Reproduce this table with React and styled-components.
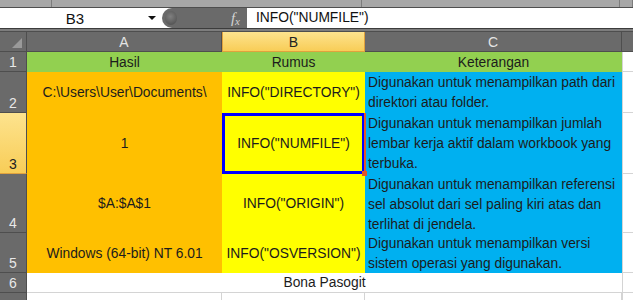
import styled, { createGlobalStyle } from "styled-components";

const GlobalStyle = createGlobalStyle`
  html, body {
    margin: 0;
    padding: 0;
    background: #fff;
  }
  body {
    font-family: "Liberation Sans", Arial, sans-serif;
  }
`;

const rows = [
  {
    n: 2,
    hasil: "C:\\Users\\User\\Documents\\",
    rumus: 'INFO("DIRECTORY")',
    ket: ["Digunakan untuk menampilkan path dari", "direktori atau folder."],
  },
  {
    n: 3,
    hasil: "1",
    rumus: 'INFO("NUMFILE")',
    ket: [
      "Digunakan untuk menampilkan jumlah",
      "lembar kerja aktif dalam workbook yang",
      "terbuka.",
    ],
    selected: true,
  },
  {
    n: 4,
    hasil: "$A:$A$1",
    rumus: 'INFO("ORIGIN")',
    ket: [
      "Digunakan untuk menampilkan referensi",
      "sel absolut dari sel paling kiri atas dan",
      "terlihat di jendela.",
    ],
  },
  {
    n: 5,
    hasil: "Windows (64-bit) NT 6.01",
    rumus: 'INFO("OSVERSION")',
    ket: ["Digunakan untuk menampilkan versi", "sistem operasi yang digunakan."],
  },
];

const App = () => {
  return (
    <Window>
      <GlobalStyle />
      <TopStrip>
        <RibbonPart $w={52} />
        <RibbonPart $w={310} />
        <RibbonPart $w={258} />
        <RibbonPart />
      </TopStrip>

      <FormulaRow>
        <NameBox>
          <span>B3</span>
          <DropArrow />
        </NameBox>
        <FxArea>
          <Grip />
          <FxLabel>
            f<sub>x</sub>
          </FxLabel>
        </FxArea>
        <FormulaInput>INFO("NUMFILE")</FormulaInput>
      </FormulaRow>
      <Gap />

      <Sheet>
        <Corner>
          <CornerTriangle />
        </Corner>
        <ColHead>A</ColHead>
        <ColHead $active>B</ColHead>
        <ColHead>C</ColHead>
        <ColHead $last />

        <RowHead>1</RowHead>
        <TitleCell>Hasil</TitleCell>
        <TitleCell>Rumus</TitleCell>
        <TitleCell>Keterangan</TitleCell>
        <Blank />

        {rows.map((r) => [
          <RowHead key={`h${r.n}`} $active={r.selected}>
            {r.n}
          </RowHead>,
          <Cell key={`a${r.n}`} $bg="#ffc000">
            {r.hasil}
          </Cell>,
          <Cell key={`b${r.n}`} $bg="#ffff00" $selected={r.selected}>
            {r.rumus}
          </Cell>,
          <NoteCell key={`c${r.n}`}>
            {r.ket.map((line) => (
              <div key={line}>{line}</div>
            ))}
          </NoteCell>,
          <Blank key={`d${r.n}`} />,
        ])}

        <RowHead>6</RowHead>
        <MergedCell>Bona Pasogit</MergedCell>
        <Blank />

        <RowHead />
        <EmptyCell />
        <EmptyCell />
        <EmptyCell />
        <Blank />
      </Sheet>
    </Window>
  );
};

const Window = styled.div`
  width: 633px;
  height: 300px;
  overflow: hidden;
  background: #fff;
`;

const TopStrip = styled.div`
  display: flex;
  height: 7px;
  background: #a7a7a7;
  border-bottom: 1px solid #4e4e4e;
`;

const RibbonPart = styled.div`
  flex: ${(p) => (p.$w ? `0 0 ${p.$w}px` : "1")};
  border-right: 1px solid #7c7c7c;
  box-sizing: border-box;
`;

const FormulaRow = styled.div`
  display: flex;
  height: 20px;
  background: #fff;
  border-bottom: 1px solid #3c3c3c;
`;

const NameBox = styled.div`
  width: 162px;
  display: flex;
  align-items: center;
  font-size: 15px;
  color: #111;
  span {
    flex: 1;
    text-align: center;
    padding-left: 2px;
  }
`;

const DropArrow = styled.i`
  width: 0;
  height: 0;
  margin-right: 6px;
  border-left: 4px solid transparent;
  border-right: 4px solid transparent;
  border-top: 4px solid #111;
`;

const FxArea = styled.div`
  width: 85px;
  display: flex;
  align-items: center;
  justify-content: space-between;
  padding: 0 7px 0 3px;
  box-sizing: border-box;
  background: #6a6a6a;
  border-radius: 10px 0 0 10px;
`;

const Grip = styled.span`
  width: 12px;
  height: 14px;
  border-radius: 50%;
  background: radial-gradient(circle at 45% 40%, #808080, #565656 75%);
`;

const FxLabel = styled.span`
  font-family: "Liberation Serif", "Times New Roman", serif;
  font-style: italic;
  font-size: 15px;
  color: #d4d4d4;
  sub {
    font-size: 11px;
    vertical-align: -2px;
  }
`;

const FormulaInput = styled.div`
  flex: 1;
  padding-left: 9px;
  font-size: 13.8px;
  line-height: 20px;
  color: #111;
`;

const Gap = styled.div`
  height: 2px;
  background: #7d7d7d;
  border-bottom: 1px solid #4e4e4e;
`;

const Sheet = styled.div`
  display: grid;
  grid-template-columns: 27px 195px 143px 257px 1fr;
  grid-template-rows: 20px 20px 41px 61px 59px 40px 20px 20px;
  font-size: 13.8px;
  color: #1c1c1c;
`;

const Corner = styled.div`
  position: relative;
  background: #6a6a6a;
  border-right: 1px solid #4e4e4e;
  border-bottom: 1px solid #4e4e4e;
`;

const CornerTriangle = styled.i`
  position: absolute;
  right: 4px;
  bottom: 3px;
  width: 0;
  height: 0;
  border-left: 10px solid transparent;
  border-bottom: 10px solid #9a9a9a;
`;

const ColHead = styled.div`
  display: flex;
  align-items: center;
  justify-content: center;
  box-sizing: border-box;
  background: ${(p) =>
    p.$active ? "linear-gradient(#fde38e, #f8cd57)" : "#6a6a6a"};
  color: ${(p) => (p.$active ? "#222" : "#e4e4e4")};
  border-right: 1px solid ${(p) => (p.$active ? "#e0a23d" : "#4e4e4e")};
  border-left: ${(p) => (p.$active ? "1px solid #e0a23d" : "none")};
  border-bottom: 1px solid ${(p) => (p.$active ? "#e0a23d" : "#4e4e4e")};
  border-right-width: ${(p) => (p.$last ? 0 : 1)}px;
  font-size: 14px;
`;

const RowHead = styled.div`
  display: flex;
  align-items: flex-end;
  justify-content: center;
  box-sizing: border-box;
  line-height: 18px;
  background: ${(p) =>
    p.$active ? "linear-gradient(#fde38e, #f8cd57)" : "#6a6a6a"};
  color: ${(p) => (p.$active ? "#222" : "#e8e8e8")};
  border-bottom: 1px solid ${(p) => (p.$active ? "#e0a23d" : "#4e4e4e")};
  border-right: 1px solid #4e4e4e;
  font-size: 14px;
`;

const TitleCell = styled.div`
  display: flex;
  align-items: center;
  justify-content: center;
  background: #92d050;
`;

const Cell = styled.div`
  position: relative;
  display: flex;
  align-items: center;
  justify-content: center;
  white-space: nowrap;
  background: ${(p) => p.$bg};
  box-shadow: ${(p) => (p.$selected ? "inset 0 0 0 3px #0000ff" : "none")};

  &::after {
    content: "";
    display: ${(p) => (p.$selected ? "block" : "none")};
    position: absolute;
    right: -1px;
    top: 0;
    width: 2px;
    height: 100%;
    background: #e2562a;
  }

  &::before {
    content: "";
    display: ${(p) => (p.$selected ? "block" : "none")};
    position: absolute;
    right: -2px;
    bottom: -2px;
    width: 5px;
    height: 5px;
    background: #e2562a;
    z-index: 2;
  }
`;

const NoteCell = styled.div`
  background: #00b0f0;
  padding: 1px 0 0 3px;
  line-height: 20px;
  white-space: nowrap;
  overflow: visible;
`;

const MergedCell = styled.div`
  grid-column: span 3;
  display: flex;
  align-items: center;
  justify-content: center;
  background: #fff;
  border-bottom: 1px solid #d4d4d4;
`;

const EmptyCell = styled.div`
  border-right: 1px solid #d4d4d4;
  border-bottom: 1px solid #d4d4d4;
`;

const Blank = styled.div`
  background: #fff;
  border-left: 1px solid #d4d4d4;
  border-bottom: 1px solid #d4d4d4;
`;

export default App;
